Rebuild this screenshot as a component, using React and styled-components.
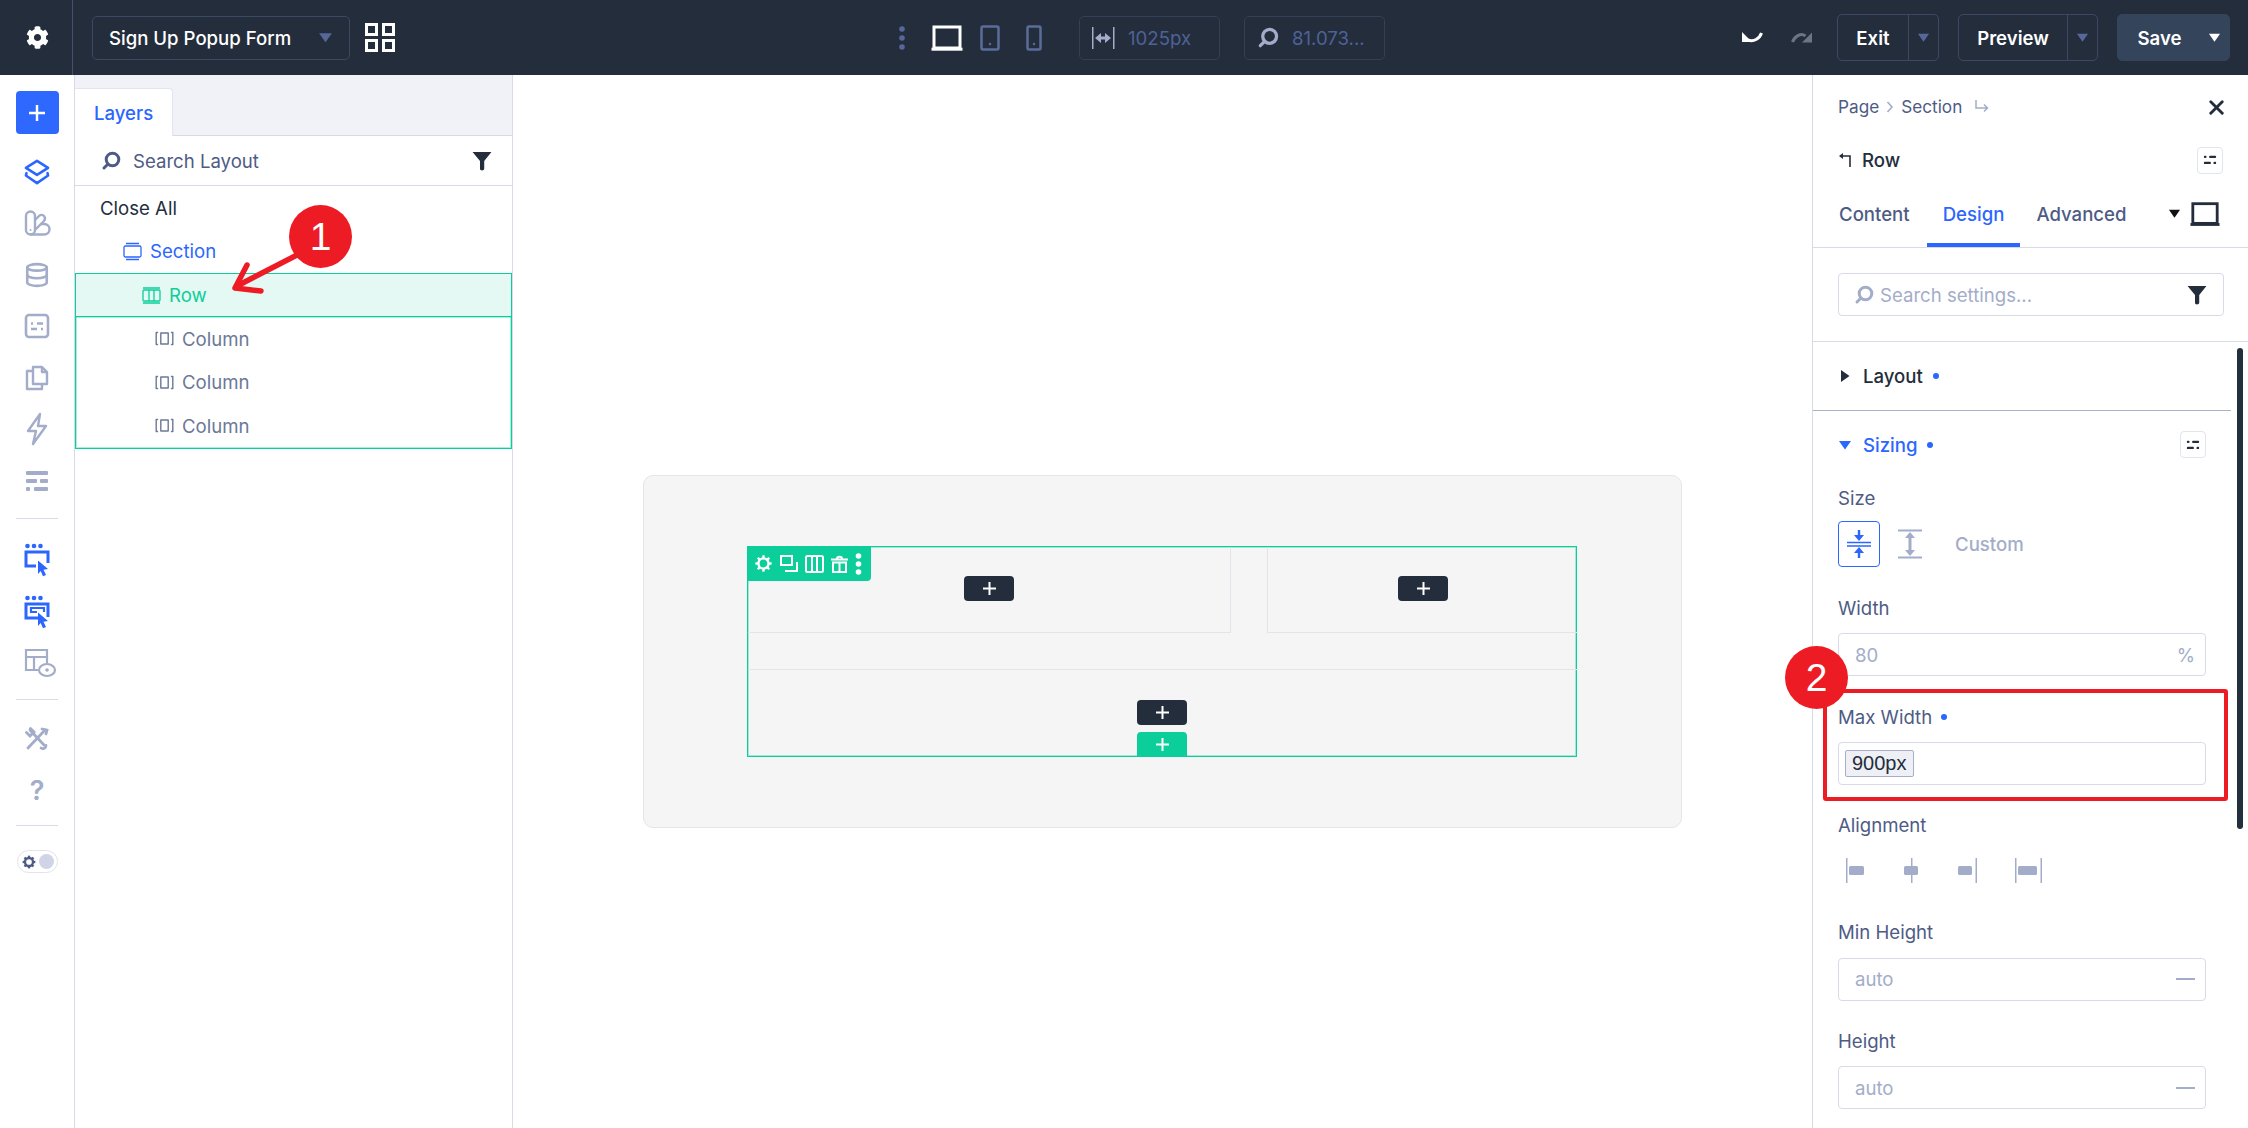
import React from 'react';
import styled, { createGlobalStyle } from 'styled-components';
import { X, Database } from 'lucide-react';
import { FaCog } from 'react-icons/fa';

const Global = createGlobalStyle`
  html, body { margin: 0; padding: 0; background: #fff; }
  * { box-sizing: border-box; }
  body { font-family: Inter, "Noto Sans", "Liberation Sans", sans-serif; font-size: 18.6px; color: #232d3c; overflow: hidden; }
`;

const BLUE = '#2b66ff', GREEN = '#0cce9a', DARK = '#232d3c', SLATE = '#4e5b85', MUTE = '#a3adc9', LINE = '#d8dbe7';

const Page = styled.div`position: relative; width: 2248px; height: 1128px; overflow: hidden; display: grid; grid-template-rows: 75px 1fr;`;
const TopBar = styled.header`background: ${DARK}; display: flex; align-items: center; color: #fff;`;
const GearCell = styled.div`width: 73px; height: 75px; border-right: 1px solid #46506a; display: flex; align-items: center; justify-content: center; padding-left: 2px;`;
const TopLeft = styled.div`width: 898px; display: flex; align-items: center;`;
const Dropdown = styled.div`margin-left: 19px; width: 258px; height: 44px; border: 1px solid #3d4863; border-radius: 5px; display: flex; align-items: center; justify-content: space-between; padding: 0 16px; font-weight: 500; white-space: nowrap;`;
const GridWrap = styled.div`margin-left: 15px; display: flex;`;
const TopCenter = styled.div`display: flex; align-items: center;`;
const Device = styled.div`display: flex; margin-left: ${p => p.$ml}px;`;
const Metric = styled.div`margin-left: ${p => p.$ml}px; width: 141px; height: 44px; border: 1px solid #353f55; border-radius: 5px; display: flex; align-items: center; padding-left: 12px; gap: 13px; color: #4f6296; white-space: nowrap;`;
const TopRight = styled.div`margin-left: auto; padding-right: 18px; display: flex; align-items: center;`;
const HistoryIcon = styled.div`display: flex; margin-right: ${p => p.$mr}px;`;
const SplitButton = styled.div`height: 47px; width: ${p => p.$w}px; margin-right: 19px; border: 1px solid #3d4863; border-radius: 5px; display: flex; font-weight: 600; background: ${p => p.$solid ? '#33445b' : 'transparent'}; ${p => p.$solid && 'border-color:#33445b;margin-right:0;'}`;
const SplitLabel = styled.div`flex: 1; display: flex; align-items: center; justify-content: center;`;
const SaveLabel = styled(SplitLabel)`padding-left: 2px;`;
const SplitCaret = styled.div`width: ${p => p.$w}px; display: flex; align-items: center; justify-content: center; border-left: ${p => p.$plain ? 'none' : '1px solid #3d4863'};`;

const Body = styled.div`display: grid; grid-template-columns: 75px 438px 1fr 436px; min-height: 0;`;
const Rail = styled.nav`border-right: 1px solid ${LINE}; padding-top: 16px; display: flex; flex-direction: column; align-items: center;`;
const PlusBtn = styled.div`width: 43px; height: 43px; background: #2f68ff; border-radius: 4px; display: flex; align-items: center; justify-content: center; margin-bottom: 12px;`;
const RailItem = styled.div`height: 51.5px; width: 100%; display: flex; align-items: center; justify-content: center; color: ${p => p.$on ? BLUE : MUTE}; `;
const RailRule = styled.div`width: 42px; height: 1px; background: #d9dce6; margin: ${p => p.$m};`;
const Question = styled.span`font-size: 27px; font-weight: 600; color: ${MUTE};`;
const EyeIcon = styled.svg`margin-left: 7px;`;
const Toggle = styled.div`margin-top: 24px; width: 41px; height: 23px; border: 1px solid #e1e4ee; border-radius: 12px; display: flex; align-items: center; justify-content: space-between; padding: 0 3px 0 4px; color: ${SLATE};`;
const ToggleKnob = styled.span`width: 15px; height: 15px; border-radius: 50%; background: #cfd5e6;`;

const LayersPanel = styled.aside`border-right: 1px solid ${LINE}; display: flex; flex-direction: column;`;
const PanelHead = styled.div`height: 61px; background: #f1f2f7; border-bottom: 1px solid ${LINE}; padding-top: 13px; display: flex;`;
const Tab = styled.div`width: 98px; height: 48px; background: #fff; border: 1px solid #e2e4ee; border-left: none; border-bottom: none; border-radius: 0 4px 0 0; color: ${BLUE}; font-weight: 500; padding-left: 19px; display: flex; align-items: center;`;
const PanelSearch = styled.div`height: 50px; border-bottom: 1px solid ${LINE}; display: flex; align-items: center; padding: 0 20px 0 26px; color: ${SLATE};`;
const PanelSearchText = styled.span`margin-left: 12px; flex: 1;`;
const TreeRow = styled.div`height: 43.5px; display: flex; align-items: center; padding-left: ${p => p.$pad}px; gap: ${p => p.$gap || 8}px; color: ${p => p.$c};`;
const RowGroup = styled.div`border: 1px solid ${GREEN}; box-shadow: inset 0 0 0 1px rgba(12, 206, 154, 0.35);`;
const RowHead = styled(TreeRow)`background: #e5f9f4; border-bottom: 1px solid ${GREEN}; box-shadow: 0 1px 0 rgba(12, 206, 154, 0.35); height: 43px;`;

const Canvas = styled.main`display: flex; justify-content: center; padding-top: 400px;`;
const Popup = styled.div`width: 1039px; height: 353px; background: #f5f5f6; border: 1px solid #e6e6ea; border-radius: 10px; padding: 70px 0 0 103px;`;
const RowBox = styled.div`position: relative; width: 830px; height: 211px; border: 1px solid ${GREEN}; box-shadow: inset 0 0 0 1px rgba(12, 206, 154, 0.35); display: grid; grid-template-columns: 483px 311px; column-gap: 36px; grid-template-rows: 86px 88px; row-gap: 36px;`;
const Col = styled.div`border-right: ${p => p.$last ? 'none' : '1px solid #e3e4ea'}; border-left: ${p => p.$first ? 'none' : '1px solid #e3e4ea'}; border-bottom: 1px solid #e3e4ea; display: flex; justify-content: center; padding-top: 29px;`;
const ColWide = styled.div`grid-column: 1 / 3; border-top: 1px solid #e3e4ea; display: flex; justify-content: center; padding: 30px 2px 0 0; position: relative;`;
const AddBtn = styled.div`width: 50px; height: 25px; background: ${DARK}; border-radius: 4px; display: flex; align-items: center; justify-content: center;`;
const AddRow = styled.div`position: absolute; left: calc(50% - 26px); bottom: 0; width: 50px; height: 25px; background: ${GREEN}; border-radius: 4px 4px 0 0; display: flex; align-items: center; justify-content: center;`;
const RowTools = styled.div`position: absolute; top: -1px; left: -1px; width: 124px; height: 35px; background: ${GREEN}; border-radius: 4px 0 4px 0; display: flex; align-items: center; padding-left: 7px; gap: 7px;`;

const Settings = styled.aside`position: relative; border-left: 1px solid ${LINE}; display: flex; flex-direction: column;`;
const Crumbs = styled.div`height: 64px; padding: 21px 20px 0 25px; display: flex; align-items: flex-start; color: ${SLATE}; font-size: 17.2px; line-height: 22px;`;
const CrumbSep = styled.span`margin: 0 7px; display: flex; padding-top: 5px; color: ${MUTE};`;
const CrumbEnd = styled.span`margin-left: 13px; display: flex; padding-top: 3px; color: ${MUTE};`;
const CloseBox = styled.span`margin-left: auto; display: flex; color: ${DARK};`;
const ElementRow = styled.div`height: 42px; padding: 0 25px; display: flex; align-items: center; font-weight: 500; gap: 11px;`;
const MiniBtn = styled.span`margin-left: auto; width: 26px; height: 27px; border: 1px solid #e2e4ee; border-radius: 4px; display: flex; align-items: center; justify-content: center; color: ${DARK};`;
const Tabs = styled.div`height: 67px; border-bottom: 1px solid ${LINE}; padding: 9px 28px 0 26px; display: flex; font-weight: 500; color: ${SLATE}; position: relative;`;
const TabItem = styled.div`height: 57px; margin-right: ${p => p.$mr}px; padding: 0 ${p => p.$pad || 0}px 6px; display: flex; align-items: center; color: ${p => p.$on ? BLUE : SLATE}; border-bottom: ${p => p.$on ? `4px solid ${BLUE}` : '4px solid transparent'};`;
const TabTools = styled.div`margin-left: auto; display: flex; align-items: center; height: 47px; gap: 9px; color: ${DARK};`;
const SearchZone = styled.div`height: 94px; border-bottom: 1px solid ${LINE}; padding: 25px 24px 0 25px;`;
const SearchBox = styled.div`height: 43px; border: 1px solid ${LINE}; border-radius: 4px; display: flex; align-items: center; padding: 0 16px 0 15px; color: ${MUTE};`;
const SearchText = styled.span`margin-left: 6px; flex: 1;`;
const Scroll = styled.div`position: relative; flex: 1; min-height: 0; padding-right: 17px;`;
const ScrollThumb = styled.div`position: absolute; right: 5px; top: 6px; width: 6px; height: 481px; border-radius: 3px; background: #232f3c;`;
const SectionHead = styled.div`height: 69px; border-bottom: 1px solid #a8b3c7; padding: 0 25px; display: flex; align-items: center; gap: 11px; font-weight: 500;`;
const SizingHead = styled.div`height: 67px; padding: 0 25px; display: flex; align-items: center; gap: 11px; font-weight: 500; color: ${BLUE};`;
const Dot = styled.span`width: 6px; height: 6px; border-radius: 50%; background: ${BLUE}; margin-left: ${p => p.$ml || 0}px;`;
const Fields = styled.div`padding: 9px 25px 0;`;
const Field = styled.div`position: relative; margin-bottom: ${p => p.$mb ?? 28.5}px;`;
const Label = styled.div`height: 22px; line-height: 22px; color: ${SLATE}; margin-bottom: 14.5px; display: flex; align-items: center; gap: 9px;`;
const Input = styled.div`height: 43px; border: 1px solid ${LINE}; border-radius: 4px; display: flex; align-items: center; justify-content: space-between; padding: 0 10px 0 16px; color: ${MUTE};`;
const SelInput = styled(Input)`padding-left: 6px; color: ${DARK};`;
const Selected = styled.span`height: 27px; padding: 0 6px; display: flex; align-items: center; background: #eef0f6; border: 1px solid #a6aecb; border-radius: 2px; font-family: "Liberation Sans", Arial, sans-serif; font-size: 20px;`;
const Dash = styled.span`width: 19px; height: 2px; background: ${MUTE};`;
const SizeRow = styled.div`display: flex; align-items: center; height: 46px; margin-top: -3px; color: ${MUTE}; font-weight: 500;`;
const SizeActive = styled.div`width: 42px; height: 46px; border: 1px solid ${BLUE}; border-radius: 4px; display: flex; align-items: center; justify-content: center; color: ${BLUE};`;
const SizeAlt = styled.div`margin-left: 17px; display: flex;`;
const CustomText = styled.span`margin-left: 32px;`;
const AlignRow = styled.div`display: flex; height: 26px; align-items: center; margin-top: 21px; padding-left: 8px; gap: ${p => p.$gap}px;`;
const RedFrame = styled.div`position: absolute; top: -17px; left: -15px; right: -22px; bottom: -16px; border: 4px solid #ed1c24; border-radius: 3px; pointer-events: none;`;
const Badge = styled.div`position: absolute; width: 63px; height: 63px; border-radius: 50%; background: #ed1c24; color: #fff; font-family: "Liberation Sans", Arial, sans-serif; font-size: 39px; display: flex; align-items: center; justify-content: center; left: ${p => p.$x}px; top: ${p => p.$y}px;`;
const ArrowSvg = styled.svg`position: absolute; left: 225px; top: 245px;`;

const Ico = ({ s = 24, w, h, vb, children, stroke = 2, c = 'currentColor', fill = 'none' }) => (
  <svg width={w || s} height={h || s} viewBox={vb || '0 0 24 24'} fill={fill} stroke={c} strokeWidth={stroke} strokeLinecap="round" strokeLinejoin="round">{children}</svg>
);

const Tri = ({ c, s = 14, right }) => (
  <svg width={s} height={s} viewBox="0 0 14 14" fill={c}><path d={right ? 'M3 1v12l8.500-6z' : 'M1 3h12L7 11.500z'} /></svg>
);
const Plus = ({ s = 13 }) => (
  <svg width={s} height={s} viewBox="0 0 13 13" stroke="#fff" strokeWidth="2"><path d="M6.500 0v13M0 6.500h13" /></svg>
);
const Mag = ({ s = 20, c = 'currentColor' }) => (
  <svg width={s} height={s} viewBox="0 0 20 20" fill="none" stroke={c} strokeWidth="3" strokeLinecap="round"><circle cx="11.500" cy="8.500" r="6.300" /><path d="M6.500 13.500 3 17" /></svg>
);
const Funnel = ({ s = 20 }) => (
  <svg width={s} height={s} viewBox="0 0 18 18" fill={DARK}><path d="M0.500 1h17L11 9v7c0 1-1 1.500-2 1.500s-1.800-.5-1.800-1.500V9z" /></svg>
);
const Dashes = ({ s = 16, c = 'currentColor' }) => (
  <svg width={s} height={s} viewBox="0 0 16 16" fill={c}><rect x="1" y="3" width="3" height="2.600" rx="1" /><rect x="7" y="3" width="8" height="2.600" rx="1" /><rect x="1" y="10" width="8" height="2.600" rx="1" /><rect x="12" y="10" width="3" height="2.600" rx="1" /></svg>
);
const Gear = ({ s = 21 }) => (
  <svg width={s} height={s} viewBox="0 0 21 21" fill="none" stroke="#fff" strokeWidth="2.600">
    <circle cx="10.500" cy="10.500" r="5.600" />
    {[0, 45, 90, 135, 180, 225, 270, 315].map(a => <path key={a} d="M10.500 1.500v3" transform={`rotate(${a} 10.500 10.500)`} />)}
  </svg>
);
const Laptop = ({ c, w = 32, h = 26 }) => (
  <svg width={w} height={h} viewBox="0 0 32 26" fill="none" stroke={c} strokeWidth="3"><rect x="3" y="2" width="26" height="21" /><path d="M0.500 24.200h31" /></svg>
);
const Tablet = ({ w, h, c = '#5b6c9b' }) => (
  <svg width={w} height={h} viewBox={`0 0 ${w} ${h}`} fill="none" stroke={c} strokeWidth="2.500"><rect x="1.500" y="1.500" width={w - 3} height={h - 3} rx="1.500" /><circle cx={w / 2} cy={h - 7} r="1.200" fill={c} stroke="none" /></svg>
);
const ColGlyph = () => (
  <Ico w={19} h={15} vb="0 0 19 15" stroke={1.400} c="#6b7897"><path d="M2.500 1.500H1.200v12h1.300M16.500 1.500h1.300v12h-1.300" /><rect x="5.800" y="2" width="7.400" height="11" /></Ico>
);
const Col3 = ({ c, s = 19 }) => (
  <svg width={s} height={s} viewBox="0 0 19 19" fill="none" stroke={c} strokeWidth="1.300"><path d="M1 2h17M1 17h17" /><rect x="1" y="4" width="17" height="11" rx="1" /><path d="M7 4v11M12 4v11" /></svg>
);
const CursorBox = ({ double }) => (
  <svg width="28" height="34" viewBox="0 0 28 34" fill={BLUE}>
    <circle cx="4.500" cy="3" r="2.300" /><circle cx="11" cy="3" r="2.300" /><circle cx="17.500" cy="3" r="2.300" />
    <path d={double ? 'M15 23H3V9h22v13' : 'M13 23H3V9h22v11'} fill="none" stroke={BLUE} strokeWidth="3" />
    {double && <path d="M14 17H8v-4h13v4" fill="none" stroke={BLUE} strokeWidth="2.200" />}
    <path d="M15 17.500 25 26l-4.500.800L23 32l-3 1.300-2.300-5.300L15 31z" />
  </svg>
);
const Align = ({ left, right, center, bar = 14 }) => {
  const w = bar + (left ? 3 : 0) + (right ? 3 : 0) + 2;
  return (
    <svg width={w} height="25" viewBox={`0 0 ${w} 25`} fill={MUTE}>
      {left && <rect x="0" y="0" width="1.500" height="25" />}
      {right && <rect x={w - 1.500} y="0" width="1.500" height="25" />}
      {center && <rect x={bar / 2} y="0" width="1.500" height="25" />}
      <rect x={left ? 3 : 0} y="8" width={bar} height="9" rx="1.500" />
    </svg>
  );
};

const columns = [1, 2, 3];

export default function App() {
  return (
    <>
      <Global />
      <Page>
        <TopBar>
          <TopLeft>
            <GearCell><FaCog size={23} /></GearCell>
            <Dropdown>Sign Up Popup Form <Tri c="#57679a" s={15} /></Dropdown>
            <GridWrap>
              <svg width="30" height="29" viewBox="0 0 30 29" fill="none" stroke="#fff" strokeWidth="3"><rect x="1.500" y="1.500" width="10" height="10" /><rect x="18.500" y="1.500" width="10" height="10" /><rect x="1.500" y="17.500" width="10" height="10" /><rect x="18.500" y="17.500" width="10" height="10" /></svg>
            </GridWrap>
          </TopLeft>
          <TopCenter>
            <svg width="8" height="24" viewBox="0 0 8 24" fill="#57679a"><circle cx="4" cy="3" r="2.800" /><circle cx="4" cy="12" r="2.800" /><circle cx="4" cy="21" r="2.800" /></svg>
            <Device $ml={25}><Laptop c="#fff" /></Device>
            <Device $ml={17}><Tablet w={20} h={26} /></Device>
            <Device $ml={26}><Tablet w={16} h={26} /></Device>
            <Metric $ml={37}>
              <svg width="23" height="22" viewBox="0 0 23 22" fill="#a3adc9"><rect x="0" y="0" width="1.500" height="22" /><rect x="21" y="0" width="1.500" height="22" /><path d="M3 11l6-5v3.500h4V6l6 5-6 5v-3.500H9V16z" /></svg>
              1025px
            </Metric>
            <Metric $ml={24}><Mag s={22} c="#a3adc9" /><span>81.073...</span></Metric>
          </TopCenter>
          <TopRight>
            <HistoryIcon $mr={28}><svg width="22" height="13" viewBox="0 0 22 13" fill="#fff"><path d="M1 1v10h10z" /><path d="M20.500 2c-2 6-8 9-13.500 7" fill="none" stroke="#fff" strokeWidth="3" /></svg></HistoryIcon>
            <HistoryIcon $mr={24}><svg width="22" height="13" viewBox="0 0 22 13" fill="#6c7582"><path d="M21 1.500v10H11z" /><path d="M1.500 11c3-7 9-9 13-6" fill="none" stroke="#6c7582" strokeWidth="3" /></svg></HistoryIcon>
            <SplitButton $w={102}><SplitLabel>Exit</SplitLabel><SplitCaret $w={30}><Tri c="#57679a" s={13} /></SplitCaret></SplitButton>
            <SplitButton $w={140}><SplitLabel>Preview</SplitLabel><SplitCaret $w={30}><Tri c="#57679a" s={13} /></SplitCaret></SplitButton>
            <SplitButton $w={113} $solid><SaveLabel>Save</SaveLabel><SplitCaret $w={30} $plain><Tri c="#fff" s={13} /></SplitCaret></SplitButton>
          </TopRight>
        </TopBar>
        <Body>
          <Rail>
            <PlusBtn><Plus s={16} /></PlusBtn>
            <RailItem $on><Ico s={28} stroke={2.200}><path d="M12 2.500 21.500 8.500 12 14.500 2.500 8.500z" /><path d="M3 13l-.5 2L12 21.500 21.500 15l-.5-2" /></Ico></RailItem>
            <RailItem><Ico s={28} vb="0 0 28 28" stroke={2.400}><path d="M3 7a4.500 4.500 0 0 1 9 0v14a4.500 4.500 0 0 1-9 0z" /><path d="M12 11l4-4c1.500-1.500 4-1.500 5 0 1.500 1.500 1 3.500 0 5l-8 8" /><path d="M18 15h3c4 0 5.500 3 5.500 5 0 3-2 5.500-5.500 5.500H8" /><circle cx="7.500" cy="21" r="1" fill="currentColor" stroke="none" /></Ico></RailItem>
            <RailItem><Database size={26} strokeWidth={2.400} /></RailItem>
            <RailItem><svg width="26" height="26" viewBox="0 0 26 26" fill="none" stroke={MUTE} strokeWidth="2.600"><rect x="2" y="2" width="22" height="22" rx="3" /><path d="M7 10.500h2M13 10.500h6M7 16h6M17 16h2" /></svg></RailItem>
            <RailItem><svg width="24" height="26" viewBox="0 0 24 26" fill="none" stroke={MUTE} strokeWidth="2.400" strokeLinejoin="round"><path d="M8 2h9l5 5v12H8z" /><path d="M8 6H2v18h15v-5" /><path d="M17 2v5h5" /></svg></RailItem>
            <RailItem><Ico w={24} h={34} vb="0 0 24 34" stroke={2.400}><path d="M15 2 3 19h8l-3 13 13-18h-8z" /></Ico></RailItem>
            <RailItem><svg width="24" height="22" viewBox="0 0 24 22" fill={MUTE}><rect x="1" y="1" width="22" height="4" rx="1" /><rect x="1" y="9" width="11" height="4" rx="1" /><rect x="15" y="9" width="8" height="4" rx="1" /><rect x="1" y="17" width="4" height="4" rx="1" /><rect x="9" y="17" width="14" height="4" rx="1" /></svg></RailItem>
            <RailRule $m="11px 0 16px" />
            <RailItem $on><CursorBox /></RailItem>
            <RailItem $on><CursorBox double /></RailItem>
            <RailItem><EyeIcon width="33" height="30" viewBox="0 0 33 30" fill="none" stroke={MUTE} strokeWidth="2.200"><path d="M14 22H2V2h21v14" /><path d="M2 9h21M10 9v13" /><ellipse cx="23" cy="22" rx="8" ry="6" fill="#fff" /><circle cx="23" cy="22" r="1.800" fill={MUTE} stroke="none" /></EyeIcon></RailItem>
            <RailRule $m="10px 0 13px" />
            <RailItem><svg width="24" height="24" viewBox="0 0 24 24" fill="none" stroke={MUTE} strokeWidth="2.800" strokeLinecap="round"><path d="M20 3 3 21" /><path d="M5 3l14 15" /><path d="M1.500 5.500 5 9 9 5 5.500 1.500" /><path d="M16 21c2 1.500 5 0 5-2.500" /><path d="M17 2l5 1-1 4" /></svg></RailItem>
            <RailItem><Question>?</Question></RailItem>
            <RailRule $m="9px 0 0" />
            <Toggle><svg width="14" height="14" viewBox="0 0 21 21" fill="none" stroke={SLATE} strokeWidth="3.500"><circle cx="10.500" cy="10.500" r="6" />{[0, 45, 90, 135, 180, 225, 270, 315].map(a => <path key={a} d="M10.500 1v3" transform={`rotate(${a} 10.500 10.500)`} />)}</svg><ToggleKnob /></Toggle>
          </Rail>
          <LayersPanel>
            <PanelHead><Tab>Layers</Tab></PanelHead>
            <PanelSearch><Mag s={20} /><PanelSearchText>Search Layout</PanelSearchText><Funnel /></PanelSearch>
            <TreeRow $pad={25} $c={DARK}>Close All</TreeRow>
            <TreeRow $pad={48} $c={BLUE}>
              <svg width="19" height="19" viewBox="0 0 19 19" fill="none" stroke={BLUE} strokeWidth="1.300"><path d="M3 1.500h13M3 17.500h13" /><rect x="1" y="4" width="17" height="11" rx="1.500" /></svg>
              Section
            </TreeRow>
            <RowGroup>
              <RowHead $pad={66} $c={GREEN}><Col3 c={GREEN} />Row</RowHead>
              {columns.map(i => <TreeRow key={i} $pad={79} $gap={8} $c="#6b7897"><ColGlyph />Column</TreeRow>)}
            </RowGroup>
          </LayersPanel>
          <Canvas>
            <Popup>
              <RowBox>
                <Col $first><AddBtn><Plus /></AddBtn></Col>
                <Col $last><AddBtn><Plus /></AddBtn></Col>
                <ColWide>
                  <AddBtn><Plus /></AddBtn>
                  <AddRow><Plus /></AddRow>
                </ColWide>
                <RowTools>
                  <Gear s={19} />
                  <svg width="18" height="18" viewBox="0 0 18 18" fill="none" stroke="#fff" strokeWidth="2"><rect x="1" y="1" width="11" height="9" /><path d="M5 16h12V7" /></svg>
                  <svg width="19" height="18" viewBox="0 0 19 18" fill="none" stroke="#fff" strokeWidth="2"><rect x="1" y="1" width="17" height="16" rx="1.500" /><path d="M7 1v16M12 1v16" /></svg>
                  <svg width="17" height="18" viewBox="0 0 17 18" fill="none" stroke="#fff" strokeWidth="2"><path d="M0 4.500h17M6 4c0-3 5-3 5 0" /><rect x="2" y="7.500" width="13" height="9.500" /><path d="M8.500 8v9" /></svg>
                  <svg width="7" height="22" viewBox="0 0 7 22" fill="#fff"><circle cx="3.500" cy="3" r="2.800" /><circle cx="3.500" cy="11" r="2.800" /><circle cx="3.500" cy="19" r="2.800" /></svg>
                </RowTools>
              </RowBox>
            </Popup>
          </Canvas>
          <Settings>
            <Crumbs>
              Page
              <CrumbSep><svg width="8" height="12" viewBox="0 0 8 12" fill="none" stroke={MUTE} strokeWidth="1.600"><path d="M1.500 1 6 6l-4.500 5" /></svg></CrumbSep>
              Section
              <CrumbEnd><svg width="14" height="15" viewBox="0 0 14 15" fill="none" stroke={MUTE} strokeWidth="1.500"><path d="M1 1v8h11M9 5.500 12.500 9 9 12.500" /></svg></CrumbEnd>
              <CloseBox><X size={23} strokeWidth={3} /></CloseBox>
            </Crumbs>
            <ElementRow>
              <svg width="13" height="14" viewBox="0 0 13 14" fill="none" stroke={DARK} strokeWidth="1.600"><path d="M12 14V3H2" /><path d="M5 0 1 3l4 3z" fill={DARK} stroke="none" /></svg>
              Row
              <MiniBtn><Dashes s={14} /></MiniBtn>
            </ElementRow>
            <Tabs>
              <TabItem $mr={17}>Content</TabItem>
              <TabItem $on $pad={16} $mr={16}>Design</TabItem>
              <TabItem>Advanced</TabItem>
              <TabTools>
                <Tri c="#111" s={13} />
                <Laptop c={DARK} w={30} h={26} />
              </TabTools>
            </Tabs>
            <SearchZone>
              <SearchBox><Mag s={20} c={MUTE} /><SearchText>Search settings...</SearchText><Funnel /></SearchBox>
            </SearchZone>
            <Scroll>
              <SectionHead><Tri c={DARK} s={14} right /> Layout <Dot $ml={-1} /></SectionHead>
              <SizingHead>
                <Tri c={BLUE} s={14} /> Sizing <Dot $ml={-1} />
                <MiniBtn><Dashes s={14} c={DARK} /></MiniBtn>
              </SizingHead>
              <Fields>
                <Field $mb={30}>
                  <Label>Size</Label>
                  <SizeRow>
                    <SizeActive><svg width="26" height="30" viewBox="0 0 26 30" fill={BLUE}><path d="M1 13.500h24M1 17h24" stroke={BLUE} strokeWidth="1.300" /><path d="M11.800 1h2.400v5H18l-5 6-5-6h3.800zM11.800 29h2.400v-5H18l-5-6-5 6h3.800z" /></svg></SizeActive>
                    <SizeAlt><svg width="26" height="30" viewBox="0 0 26 30" fill={MUTE}><path d="M1 1.500h24M1 28.500h24" stroke={MUTE} strokeWidth="2" /><path d="M13 3l5 6h-3.500v12H18l-5 6-5-6h3.500V9H8z" /></svg></SizeAlt>
                    <CustomText>Custom</CustomText>
                  </SizeRow>
                </Field>
                <Field $mb={29.500}>
                  <Label>Width</Label>
                  <Input>80<span>%</span></Input>
                </Field>
                <Field $mb={29}>
                  <Label>Max Width <Dot /></Label>
                  <SelInput><Selected>900px</Selected></SelInput>
                  <RedFrame />
                </Field>
                <Field $mb={38}>
                  <Label>Alignment</Label>
                  <AlignRow $gap={38}>
                    <Align left bar={15} />
                    <Align center bar={14} />
                    <Align right bar={14} />
                    <Align left right bar={19} />
                  </AlignRow>
                </Field>
                <Field $mb={29}>
                  <Label>Min Height</Label>
                  <Input>auto<Dash /></Input>
                </Field>
                <Field>
                  <Label>Height</Label>
                  <Input>auto<Dash /></Input>
                </Field>
              </Fields>
              <ScrollThumb />
            </Scroll>
          </Settings>
        </Body>
        <ArrowSvg width="90" height="60" viewBox="0 0 90 60" fill="none" stroke="#ed1c24" strokeWidth="5.500" strokeLinecap="round" strokeLinejoin="round">
          <path d="M72 10 12 41" />
          <path d="M22 20 10 43l26 3" />
        </ArrowSvg>
        <Badge $x={289} $y={205}>1</Badge>
        <Badge $x={1785} $y={646}>2</Badge>
      </Page>
    </>
  );
}
